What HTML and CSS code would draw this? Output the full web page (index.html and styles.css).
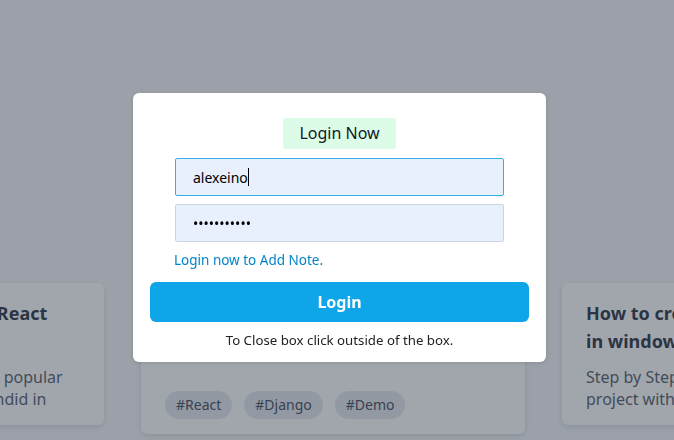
FILE: index.html
```html
<!DOCTYPE html>
<html lang="en">
<head>
<meta charset="utf-8">
<title>Notes – Login</title>
<link rel="stylesheet" href="styles.css">
</head>
<body>
  <main class="cards">
    <article class="card">
      <h2 class="card-title">Making a fullstack app with React<br>step</h2>
      <p class="card-text">Learn to use Django and the most popular<br>frontend library which works splendid in</p>
    </article>
    <article class="card">
      <h2 class="card-title">Notes app with Django and React</h2>
      <p class="card-text">A simple demo project to try out.</p>
      <div class="tags">
        <span class="tag">#React</span>
        <span class="tag">#Django</span>
        <span class="tag">#Demo</span>
      </div>
    </article>
    <article class="card">
      <h2 class="card-title">How to create a Django project in windows</h2>
      <p class="card-text">Step by Step guide to create a Django project with virtual environment.</p>
    </article>
  </main>

  <div class="overlay">
    <form class="modal">
      <div class="badge">Login Now</div>
      <div class="field field-focus"><span>alexeino</span><span class="caret"></span></div>
      <input class="field" type="password" value="password123">
      <a class="hint" href="#">Login now to Add Note.</a>
      <button class="btn" type="button">Login</button>
      <p class="close-note">To Close box click outside of the box.</p>
    </form>
  </div>
</body>
</html>
```

FILE: styles.css
```css
* { box-sizing: border-box; }
html, body { margin: 0; height: 100%; }
body {
  background: #f5f6f8;
  font-family: "Segoe UI", "Noto Sans", "Open Sans", sans-serif;
  overflow: hidden;
}
.cards {
  display: grid;
  grid-template-columns: repeat(3, 384px);
  justify-content: center;
  align-items: start;
  column-gap: 37px;
  padding-top: 283px;
  margin-left: -8px;
}
.card {
  background: #fff;
  border-radius: 6px;
  box-shadow: 0 2px 6px rgba(0,0,0,0.12);
  padding: 16px 25px 15px 24px;
  overflow: hidden;
}
.card-title {
  margin: 0;
  font-size: 18px;
  line-height: 28px;
  font-weight: 700;
  color: #1f2937;
  white-space: nowrap;
}
.card:nth-child(2) .card-title,
.card:nth-child(3) .card-title { white-space: normal; }
.card:nth-child(3) .card-title { width: 290px; }
.card-text {
  margin: 11px 0 0;
  font-size: 16px;
  line-height: 22px;
  color: #4b5563;
  white-space: nowrap;
}
.card:nth-child(3) .card-text { white-space: normal; width: 320px; }
.tags {
  display: flex;
  gap: 12px;
  margin-top: 31px;
}
.tag {
  background: #e5e7eb;
  color: #374151;
  border-radius: 14px;
  height: 28px;
  line-height: 28px;
  padding: 0 11px;
  font-size: 14px;
}

.overlay {
  position: fixed;
  inset: 0;
  background: rgba(55,65,81,0.47);
  display: flex;
  justify-content: center;
  align-items: flex-start;
  padding: 93px 0 0 5px;
}
.modal {
  width: 413px;
  background: #fff;
  border-radius: 6px;
  box-shadow: 0 1px 4px rgba(0,0,0,0.12);
  padding: 25px 17px 13px;
  display: flex;
  flex-direction: column;
  align-items: center;
}
.badge {
  background: #dcfce7;
  color: #111827;
  border-radius: 3px;
  height: 31px;
  line-height: 31px;
  padding: 0 16px;
  font-size: 16px;
}
.field {
  display: flex;
  align-items: center;
  width: 329px;
  height: 38px;
  margin-top: 9px;
  background: #e8f0fe;
  border: 1px solid #cbd5e1;
  border-radius: 2px;
  padding: 0 17px;
  font-family: inherit;
  font-size: 14px;
  color: #000;
  outline: none;
}
.field-focus { border-color: #38aee8; }
.field + .field { margin-top: 8px; }
.caret {
  display: inline-block;
  width: 1px;
  height: 18px;
  background: #000;
}
.hint {
  align-self: flex-start;
  margin: 8px 0 0 24px;
  font-size: 13.5px;
  line-height: 20px;
  color: #0284c7;
  text-decoration: none;
}
.btn {
  width: 100%;
  height: 40px;
  margin-top: 12px;
  border: 0;
  border-radius: 6px;
  background: #0ea5e9;
  color: #fff;
  font-family: inherit;
  font-size: 16px;
  font-weight: 700;
}
.close-note {
  margin: 9px 0 0;
  font-size: 13.25px;
  line-height: 18px;
  color: #222;
}
```
